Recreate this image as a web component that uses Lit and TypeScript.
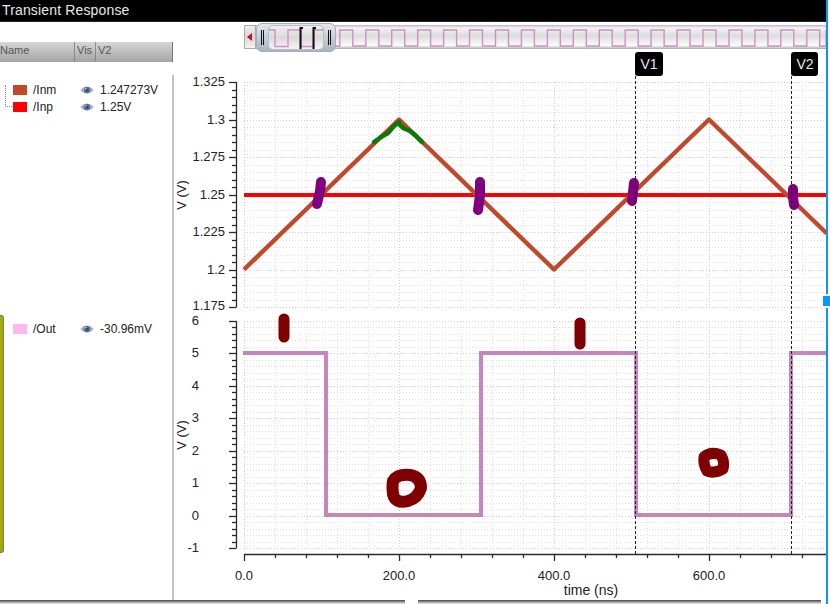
import { LitElement, html, css, svg } from "lit";
import { customElement } from "lit/decorators.js";

const X0 = 244;
const XS = 155 / 200;
const xOf = (t: number) => X0 + t * XS;
const XEND = 826;

const Y1 = (v: number) => 82 + ((1.325 - v) / 0.025) * 37.5;
const Y2 = (v: number) => 321 + (6 - v) * 32.45;

function range(a: number, b: number, s: number) {
  const r: number[] = [];
  for (let i = 0; a + i * s <= b + 1e-6; i++) r.push(a + i * s);
  return r;
}

function eye() {
  return html`<svg class="eye" viewBox="0 0 14 10" width="14" height="10">
    <path d="M0.5 5 C3 0.5 11 0.5 13.5 5 C11 9.5 3 9.5 0.5 5Z" fill="#9fb1cf" />
    <ellipse cx="7" cy="5" rx="3.2" ry="3.2" fill="#5a7097" />
    <ellipse cx="7" cy="5" rx="1.5" ry="1.5" fill="#2f4468" />
    <ellipse cx="5.6" cy="3.8" rx="1" ry="0.7" fill="#c9d4e6" />
  </svg>`;
}

@customElement("app-root")
export class AppRoot extends LitElement {
  static styles = css`
    :host {
      display: block;
      width: 830px;
      height: 604px;
      overflow: hidden;
      background: #fff;
      font-family: "Liberation Sans", Arial, sans-serif;
    }
    .frame { display: flex; width: 830px; height: 604px; position: relative; }
    .content { width: 826px; display: flex; flex-direction: column; }
    .edge { width: 2px; background: #0a96ff; }
    .edge-pad { width: 2px; }
    .handle {
      position: absolute; left: 823px; top: 296px; width: 7px; height: 10px;
      background: #0a96ff; box-shadow: 0 -2px 0 #fff, 0 2px 0 #fff;
    }
    .title {
      height: 22px; background: #000; color: #e8e8e8; font-size: 14px;
      line-height: 21px; padding-left: 2px; letter-spacing: 0.15px;
      box-sizing: border-box; border-bottom: 1px solid #222;
    }
    .body { height: 578px; display: flex; }
    .panel { width: 172px; display: flex; flex-direction: column; padding-top: 20px; }
    .head {
      height: 20px; display: flex; font-size: 11px; color: #555; line-height: 15px;
      background: linear-gradient(#d6d6d6, #a4a4a4);
      box-sizing: border-box; border-right: 1px solid #777; margin-right: -1px;
    }
    .head span { box-sizing: border-box; border-right: 1px solid #888; padding-top: 1px; }
    .c1 { width: 75px; }
    .c2 { width: 21px; padding-left: 2px; }
    .c3 { flex: 1; border-right: none !important; padding-left: 2px; }
    .group { margin-top: 23px; padding-left: 13px; }
    .tree {
      width: 7px; margin-left: -8px; margin-right: 1px; height: 22px; flex: none;
      border-left: 1px dotted #888; border-bottom: 1px dotted #888; box-sizing: border-box;
    }
    .rows { display: flex; }
    .list { display: flex; flex-direction: column; gap: 7px; }
    .row { display: flex; align-items: center; height: 10px; font-size: 12px; color: #222; }
    .sw { width: 14px; height: 10px; flex: none; }
    .name { width: 53px; padding-left: 6px; box-sizing: border-box; }
    .eye { flex: none; margin-right: 6px; }
    .out { display: flex; margin-top: 203px; height: 238px; }
    .olive {
      width: 4px; height: 238px; flex: none; background: #a3ab00;
      border: 1px solid #777; border-left: none; box-sizing: border-box;
      border-radius: 0 3px 3px 0;
    }
    .outrow { padding-left: 9px; margin-top: 9px; }
    .sep { width: 2px; margin-top: 53px; background: #c2c2c2; flex: none; }
    .main { flex: 1; display: flex; flex-direction: column; min-width: 0; }
    .over {
      position: relative; margin: 3px 0 0 70px; height: 24px; box-sizing: border-box;
      background: linear-gradient(#b9b9b9 0, #f4f4f4 12%, #dcdcdc 45%, #fbfbfb 85%, #aaa 100%);
    }
    .over svg { display: block; position: absolute; left: 0; top: 0; }
    .arrow {
      position: absolute; left: 0; top: 0; width: 12px; height: 24px; box-sizing: border-box;
      background: linear-gradient(#eee, #d8d8d8 50%, #f4f4f4); border: 1px solid #aaa;
      border-radius: 2px 0 0 2px;
    }
    .arrow::after {
      content: ""; position: absolute; left: 2px; top: 7px; border: 4px solid transparent;
      border-left: none; border-right: 5px solid #e0002a;
    }
    .thumb {
      position: absolute; left: 12px; top: -2px; width: 80px; height: 29px; box-sizing: border-box;
      border-radius: 6px; border: 1px solid #a6b0bc;
      background: linear-gradient(#e4e8ed, #a9b4c1);
    }
    .thumb-win {
      position: absolute; left: 11px; top: 1px; width: 56px; height: 25px; box-sizing: border-box;
      border: 1px solid #b8bec6; border-radius: 5px;
      background: linear-gradient(#f1f1f1, #d9d9d9 50%, #f5f5f5);
    }
    .grip {
      position: absolute; top: 6px; height: 15px; width: 1px; background: #111;
      box-shadow: 2px 0 0 #111;
    }
    .g1 { left: 4px; }
    .g2 { left: 71px; }
    .chart { display: block; margin-top: 3px; overflow: visible; }
    .tick { stroke: #2a2a2a; stroke-width: 1.3; fill: none; }
    .grid { stroke: #e0e0e0; stroke-width: 1; stroke-dasharray: 1 2; fill: none; }
    .gridmaj { stroke: #cccccc; stroke-width: 1; stroke-dasharray: 1 2; fill: none; }
    .lbl { font-family: "Liberation Sans", Arial, sans-serif; font-size: 13px; fill: #222; }
    .lbl2 { font-family: "Liberation Sans", Arial, sans-serif; font-size: 14px; fill: #222; }
    .lbl3 { font-family: "Liberation Sans", Arial, sans-serif; font-size: 13px; fill: #222; text-anchor: middle; }
    .w { fill: none; stroke-linejoin: round; stroke-linecap: butt; }
    .inm { stroke: #c1482b; stroke-width: 4.4; }
    .inp { stroke: #ff0000; stroke-width: 4; }
    .outw { stroke: #c586bc; stroke-width: 4; stroke-linejoin: miter; }
    .mark { fill: none; stroke-linecap: round; stroke-linejoin: round; }
    .purple { stroke: #800080; stroke-width: 10; }
    .green { stroke: #087a08; stroke-width: 4.5; }
    .dred { stroke: #7f0000; stroke-width: 11; }
    .cursor { stroke: #222; stroke-width: 1; stroke-dasharray: 3 2; }
    .badge { fill: #000; }
    .badgetxt { font-family: "Liberation Sans", Arial, sans-serif; font-size: 14px; fill: #e8e8e8; text-anchor: middle; }
    .foot { height: 4px; display: flex; gap: 13px; }
    .foot i { display: block; background: linear-gradient(#444, #eee); height: 4px; }
    .f1 { width: 405px; }
    .f2 { width: 403px; }
  `;

  overviewWave() {
    let d = "M24 5 H31";
    let x = 31;
    while (x < 582) {
      d += " V21";
      x += 12.97;
      d += ` H${Math.min(x, 582).toFixed(1)}`;
      d += " V5";
      x += 12.97;
      d += ` H${Math.min(x, 582).toFixed(1)}`;
    }
    return d;
  }

  axes() {
    const parts: unknown[] = [];
    const xs = range(0, 750, 40);
    const plots = [
      { top: 82, bot: 307, ys: range(0, 30, 1).map((i) => Math.round(82 + i * 7.5) + 0.5) },
      { top: 321, bot: 548, ys: range(0, 35, 1).map((i) => Math.round(321 + i * 6.49) + 0.5) },
    ];
    for (const p of plots) {
      p.ys.forEach((y, i) => {
        parts.push(svg`<line class=${i % 5 === 0 ? "gridmaj" : "grid"} x1="244" x2=${XEND} y1=${y} y2=${y}></line>`);
      });
      for (const t of xs) {
        const x = Math.round(xOf(t)) + 0.5;
        if (x > XEND) continue;
        parts.push(svg`<line class=${t % 200 === 0 ? "gridmaj" : "grid"} x1=${x} x2=${x} y1=${p.top} y2=${p.bot}></line>`);
      }
      parts.push(svg`<line class="tick" x1="236.5" x2="236.5" y1=${p.top} y2=${p.bot}></line>`);
      p.ys.forEach((y, i) => {
        const major = i % 5 === 0;
        parts.push(svg`<line class="tick" x1=${major ? 229 : 232} x2="236.5" y1=${y} y2=${y}></line>`);
      });
    }
    parts.push(svg`<line class="tick" x1="244" x2=${XEND} y1="554.5" y2="554.5"></line>`);
    for (const t of xs) {
      const x = Math.round(xOf(t)) + 0.5;
      if (x > XEND) continue;
      parts.push(svg`<line class="tick" x1=${x} x2=${x} y1="554" y2=${t % 200 === 0 ? 561 : 558}></line>`);
    }
    for (const [t, y] of [["1.325", 82], ["1.3", 119.5], ["1.275", 157], ["1.25", 194.5], ["1.225", 232], ["1.2", 269.5], ["1.175", 306]] as [string, number][]) {
      parts.push(svg`<text class="lbl" x="225" y=${y + 4} text-anchor="end">${t}</text>`);
    }
    for (const v of [6, 5, 4, 3, 2, 1, 0, -1]) {
      parts.push(svg`<text class="lbl" x="199" y=${Y2(v) + 4} text-anchor="end">${v}</text>`);
    }
    for (const t of [0, 200, 400, 600]) {
      parts.push(svg`<text class="lbl" x=${xOf(t)} y="580" text-anchor="middle">${t.toFixed(1)}</text>`);
    }
    parts.push(svg`<text class="lbl2" x="591" y="595" text-anchor="middle">time (ns)</text>`);
    parts.push(svg`<text class="lbl3" transform="translate(186 195) rotate(-90)">V (V)</text>`);
    parts.push(svg`<text class="lbl3" transform="translate(186 435) rotate(-90)">V (V)</text>`);
    return parts;
  }

  render() {
    const inm = [
      [0, 1.2], [200, 1.3], [400, 1.2], [600, 1.3], [752, 1.224],
    ].map(([t, v]) => `${xOf(t).toFixed(1)},${Y1(v).toFixed(1)}`).join(" ");
    const outw = `243,353 326,353 326,515 481,515 481,353 636,353 636,515 791,515 791,353 ${XEND},353`;

    return html`
      <div class="frame">
        <div class="content">
          <div class="title">Transient Response</div>
          <div class="body">
            <div class="panel">
              <div class="head">
                <span class="c1">Name</span><span class="c2">Vis</span><span class="c3">V2</span>
              </div>
              <div class="group rows">
                <div class="tree"></div>
                <div class="list">
                  <div class="row"><span class="sw" style="background:#c1482b"></span><span class="name">/Inm</span>${eye()}<span>1.247273V</span></div>
                  <div class="row"><span class="sw" style="background:#ff0000"></span><span class="name">/Inp</span>${eye()}<span>1.25V</span></div>
                </div>
              </div>
              <div class="out">
                <div class="olive"></div>
                <div class="list outrow">
                  <div class="row"><span class="sw" style="background:#ffb8ec"></span><span class="name">/Out</span>${eye()}<span>-30.96mV</span></div>
                </div>
              </div>
            </div>
            <div class="sep"></div>
            <div class="main">
              <div class="over">
                <svg width="582" height="24" viewBox="0 0 582 24">
                  <path d=${this.overviewWave()} fill="none" stroke="#cf8fc4" stroke-width="1.4"></path>
                </svg>
                <div class="arrow"></div>
                <div class="thumb">
                  <div class="thumb-win"></div>
                  <svg width="80" height="29" viewBox="0 0 80 29">
                    <path d="M12 6 H18 V22.5 H31 V6 H44 V22.5 H57 V6 H67" fill="none" stroke="#cf8fc4" stroke-width="1.4"></path>
                    <path d="M43.5 25 V4 H46 M56.5 25 V4 H59" fill="none" stroke="#111" stroke-width="2"></path>
                  </svg>
                  <div class="grip g1"></div>
                  <div class="grip g2"></div>
                </div>
              </div>
              <svg class="chart" width="652" height="548" viewBox="174 52 652 548">
                ${this.axes()}
                <polyline class="w inp" points="244,195 ${XEND},195"></polyline>
                <polyline class="w inm" points=${inm}></polyline>
                <polyline class="w outw" points=${outw}></polyline>
                <path class="mark green" d="M374 142 L381 137 L388 133 L394 126 L399 122"></path>
                <path class="mark green" d="M399 124 L403 128 L410 131 L416 136 L422 142"></path>
                <path class="mark purple" d="M321 182 L320 191 L317 204"></path>
                <path class="mark purple" d="M480 182 L480 195 L478 210"></path>
                <path class="mark purple" d="M634 183 L633 192 L632 201"></path>
                <path class="mark purple" d="M793 189 L793 197 L794 205"></path>
                <path class="mark dred" d="M284 319 L284 337"></path>
                <path class="mark dred" d="M580 323 L580 344"></path>
                <path class="mark dred" style="stroke-width:12" d="M393 481 Q397 474 410 475 Q421 477 421 488 Q418 498 408 501 Q395 504 393 494 Q392 486 393 481Z"></path>
                <path class="mark dred" style="stroke-width:11" d="M704 457 Q711 451 721 455 Q725 462 723 469 Q714 474 707 471 Q703 464 704 457Z"></path>
                <line class="cursor" x1="635.5" x2="635.5" y1="76" y2="555"></line>
                <line class="cursor" x1="791.5" x2="791.5" y1="76" y2="555"></line>
                <rect class="badge" x="635" y="52" width="28" height="24" rx="3"></rect>
                <text class="badgetxt" x="649" y="69">V1</text>
                <rect class="badge" x="791" y="52" width="27" height="24" rx="3"></rect>
                <text class="badgetxt" x="805" y="69">V2</text>
              </svg>
            </div>
          </div>
          <div class="foot"><i class="f1"></i><i class="f2"></i></div>
        </div>
        <div class="edge"></div>
        <div class="edge-pad"></div>
        <div class="handle"></div>
      </div>
    `;
  }
}
